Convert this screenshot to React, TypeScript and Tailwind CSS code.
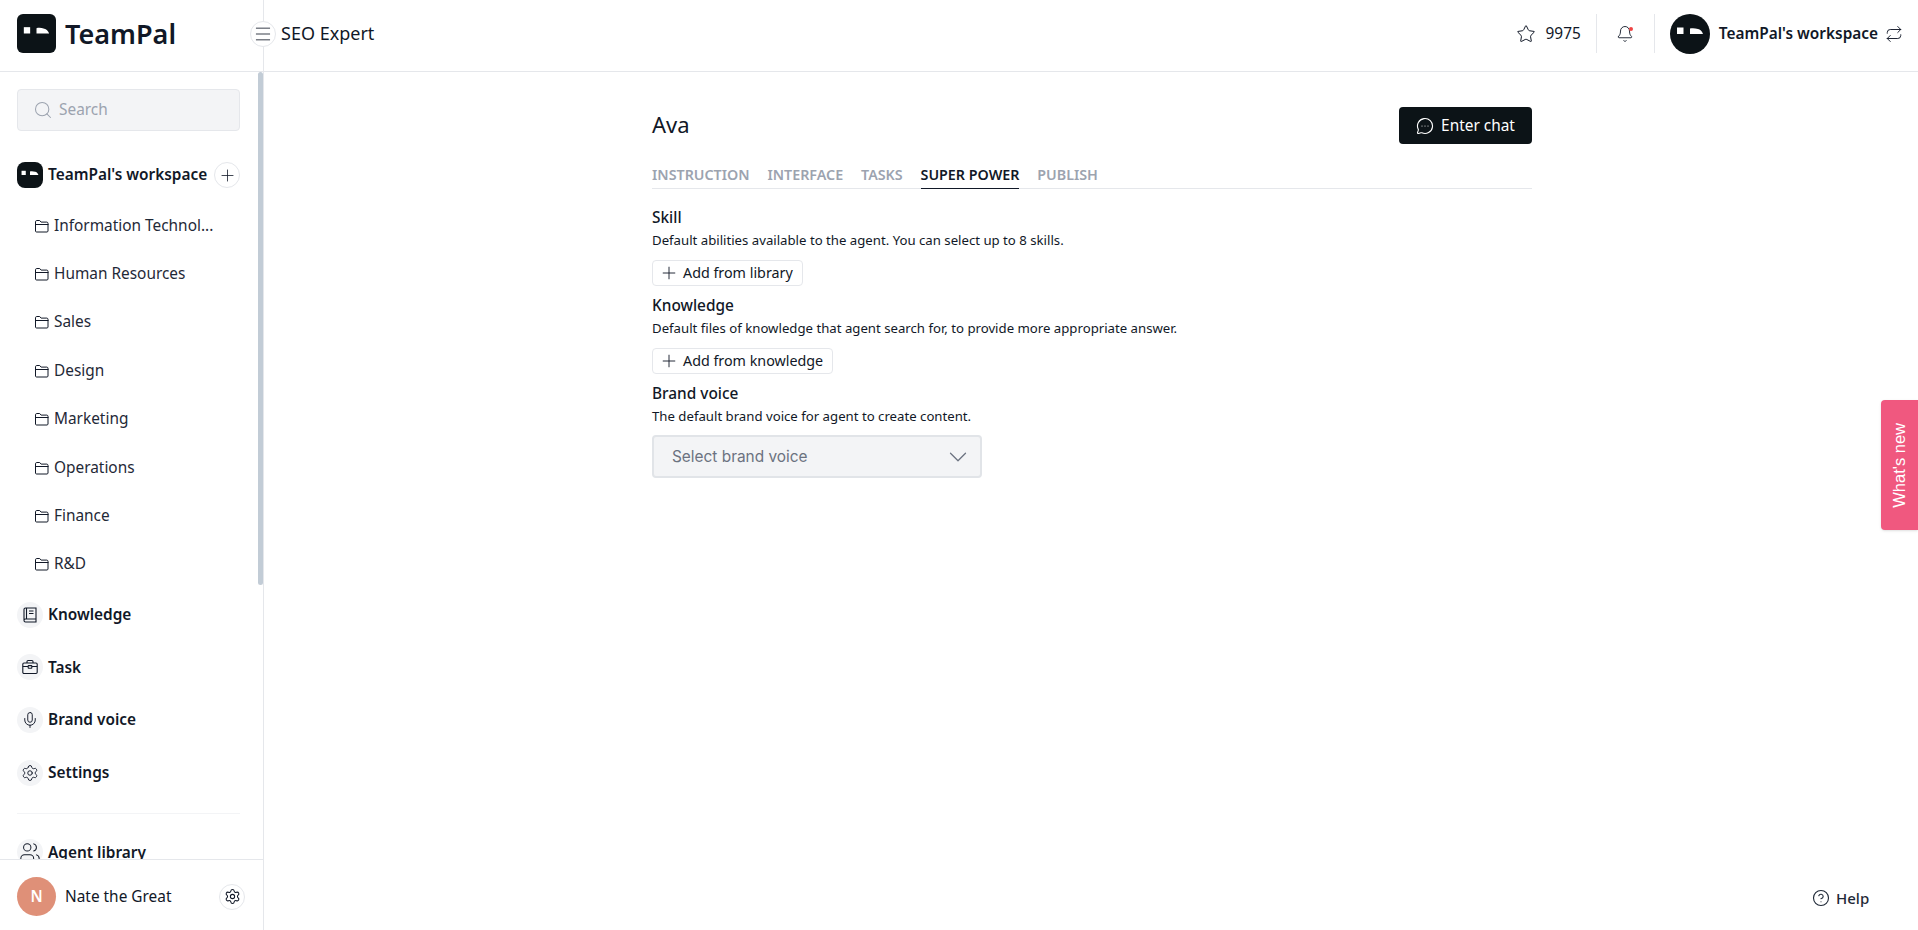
import React from "react";
import { Search, Plus, Settings, Star, Bell, Repeat, HelpCircle, Menu, ChevronDown, Users, Mic, MessageCircleMore } from "lucide-react";

function Mark({ className }: { className: string }) {
  return (
    <svg viewBox="0 0 40 40" className={className} aria-hidden>
      <rect x="0" y="0" width="40" height="40" fill="#0c1317" />
      <rect x="7" y="13.5" width="6.5" height="6.5" fill="#ffffff" />
      <path d="M20 14.5 L20 20 L33 20 C32 17 30 15.5 28 15 C25 14 22 14 20 14.5 Z" fill="#ffffff" />
    </svg>
  );
}

function FolderIcon() {
  return (
    <svg width="16" height="16" viewBox="0 0 16 16" fill="none" stroke="currentColor" strokeWidth="1" className="shrink-0" aria-hidden>
      <path d="M1.5 13V3.8c0-.7.5-1.3 1.2-1.3h3l1.4 1.6h5.7c.7 0 1.2.5 1.2 1.2V13c0 .6-.5 1-1 1H2.5c-.6 0-1-.4-1-1Z" />
      <path d="M1.5 6.5h13" />
    </svg>
  );
}

function BookIcon() {
  return (
    <svg width="18" height="18" viewBox="0 0 18 18" fill="none" stroke="currentColor" strokeWidth="1.1" aria-hidden>
      <path d="M3 14V3.5C3 2.7 3.7 2 4.5 2H15v11H4.5C3.7 13 3 13.6 3 14.5S3.7 16 4.5 16H15v-3" />
      <path d="M5.5 2v11" />
      <path d="M8 5h4.5M8 7.5h4.5" />
    </svg>
  );
}

function CaseIcon() {
  return (
    <svg width="18" height="18" viewBox="0 0 18 18" fill="none" stroke="currentColor" strokeWidth="1.1" aria-hidden>
      <rect x="1.8" y="5" width="14.4" height="10.5" rx="1.2" />
      <path d="M6 5V3.6C6 3 6.5 2.5 7.1 2.5h3.8c.6 0 1.1.5 1.1 1.1V5" />
      <path d="M1.8 8.5h5.2M11 8.5h5.2" />
      <rect x="7.2" y="7.6" width="3.6" height="2.6" rx=".4" />
    </svg>
  );
}

const folders = ["Information Technol...", "Human Resources", "Sales", "Design", "Marketing", "Operations", "Finance", "R&D"];
const folderH = ["h-[48px]", "h-[48px]", "h-[48px]", "h-[49px]", "h-[48px]", "h-[49px]", "h-[48px]", "h-[48px]"];

function NavItem({ icon, label }: { icon: React.ReactNode; label: string }) {
  return (
    <div className="flex items-center gap-[5px] h-[52.6px] shrink-0">
      <div className="w-[26px] h-[26px] rounded-full bg-[#f3f4f6] flex items-center justify-center text-[#111827]">{icon}</div>
      <span className="text-[15.4px] font-semibold text-[#111827]">{label}</span>
    </div>
  );
}

function Section({ title, desc, children }: { title: string; desc: string; children: React.ReactNode }) {
  return (
    <div>
      <div className="text-[15.4px] leading-[24px] font-medium text-[#111827] pt-[1px]">{title}</div>
      <div className="text-[13.2px] leading-[20px] text-[#111827]">{desc}</div>
      {children}
    </div>
  );
}

function AddButton({ label }: { label: string }) {
  return (
    <div className="mt-[10px] mb-[7px] inline-flex items-center h-[26px] pl-[6px] pr-[9px] gap-[4px] rounded-[4px] border border-[#e5e7eb] bg-white text-[14.3px] text-[#111827]">
      <Plus size={20} strokeWidth={1.1} />
      <span>{label}</span>
    </div>
  );
}

export default function App() {
  return (
    <div className="relative w-full h-[930px] overflow-hidden bg-white flex flex-col text-[#111827] font-['Noto_Sans','Liberation_Sans',sans-serif]">
      <header className="h-[72px] shrink-0 flex border-b border-[#e5e7eb]">
        <div className="w-[264px] shrink-0 border-r border-[#e5e7eb] flex items-center pl-[17px] pb-[4px] gap-[9px]">
          <Mark className="w-[39px] h-[39px] rounded-[6px]" />
          <span className="text-[27px] font-semibold leading-none">TeamPal</span>
        </div>
        <div className="flex-1 flex items-center pl-[17px] pr-[14px] pb-[4px]">
          <span className="text-[18px]">SEO Expert</span>
          <div className="ml-auto flex items-center">
            <Star size={20} strokeWidth={1.2} />
            <span className="ml-[10px] text-[15.4px]">9975</span>
            <div className="w-px h-[39px] bg-[#e5e7eb] ml-[15px]" />
            <div className="relative w-[57px] flex justify-center">
              <Bell size={18} strokeWidth={1.2} />
              <span className="absolute top-[2px] left-[32px] w-[4px] h-[4px] rounded-full bg-[#ef4444]" />
            </div>
            <div className="w-px h-[39px] bg-[#e5e7eb]" />
            <Mark className="w-[40px] h-[40px] rounded-full ml-[15px]" />
            <span className="ml-[9px] text-[15.4px] font-semibold">TeamPal's workspace</span>
            <Repeat size={18} strokeWidth={1.25} className="ml-[7px] mr-[1px]" />
          </div>
        </div>
      </header>

      <div className="absolute left-[250px] top-[21px] w-[26px] h-[26px] rounded-full border border-[#e5e7eb] bg-white flex items-center justify-center">
        <Menu size={20} strokeWidth={1} />
      </div>

      <div className="flex-1 min-h-0 flex">
        <aside className="w-[264px] shrink-0 border-r border-[#e5e7eb] flex flex-col relative">
          <div className="flex-1 min-h-0 overflow-hidden px-[17px] pt-[17px] pr-[23px]">
            <div className="h-[42px] rounded-[4px] border border-[#e5e7eb] bg-[#f3f4f6] flex items-center pl-[15px] gap-[6px] text-[#9ca3af]">
              <Search size={20} strokeWidth={1.25} />
              <span className="text-[15.4px]">Search</span>
            </div>
            <div className="flex items-center mt-[31px] h-[26px]">
              <Mark className="w-[26px] h-[26px] rounded-[8px]" />
              <span className="ml-[5px] text-[15.4px] font-semibold whitespace-nowrap">TeamPal's workspace</span>
              <div className="ml-auto w-[26px] h-[26px] rounded-full border border-[#e5e7eb] flex items-center justify-center shrink-0">
                <Plus size={19} strokeWidth={1} />
              </div>
            </div>
            <div className="mt-[14px] pl-[17px]">
              {folders.map((f, i) => (
                <div key={f} className={`flex items-center gap-[4px] ${folderH[i]}`}>
                  <FolderIcon />
                  <span className="text-[15.4px] text-[#1f2937] whitespace-nowrap">{f}</span>
                </div>
              ))}
            </div>
            <div className="mt-[0.5px]">
              <NavItem icon={<BookIcon />} label="Knowledge" />
              <NavItem icon={<CaseIcon />} label="Task" />
              <NavItem icon={<Mic size={18} strokeWidth={1.25} />} label="Brand voice" />
              <NavItem icon={<Settings size={18} strokeWidth={1.25} />} label="Settings" />
            </div>
            <div className="h-px bg-[#f3f4f6] mt-[14px]" />
            <div className="mt-[12px]">
              <NavItem icon={<Users size={22} strokeWidth={1.1} />} label="Agent library" />
            </div>
          </div>
          <div className="absolute right-0 top-0 w-[5px] h-[513px] rounded-[3px] bg-[#c2ccd6]" />
          <div className="h-[71px] shrink-0 border-t border-[#e5e7eb] bg-white flex items-center pl-[17px] pr-[18px] pt-[3px]">
            <div className="w-[39px] h-[39px] rounded-full bg-[#df9078] text-white text-[15.4px] font-semibold flex items-center justify-center">N</div>
            <span className="ml-[9px] text-[15.4px]">Nate the Great</span>
            <div className="ml-auto w-[26px] h-[26px] rounded-full border border-[#e5e7eb] flex items-center justify-center">
              <Settings size={17} strokeWidth={1.5} />
            </div>
          </div>
        </aside>

        <main className="flex-1 min-w-0 pt-[35px] pl-[388px]">
          <div className="w-[880px]">
            <div className="flex items-center justify-between h-[37px]">
              <h1 className="text-[22px] font-normal text-[#111827] pb-[2px]">Ava</h1>
              <div className="h-[37px] w-[133px] rounded-[4px] bg-[#0c1317] text-white flex items-center justify-center gap-[7px] text-[15.4px]">
                <MessageCircleMore size={18} strokeWidth={1.5} />
                <span>Enter chat</span>
              </div>
            </div>
            <div className="mt-[18px] h-[27px] flex gap-[17.8px] border-b border-[#e5e7eb] text-[14.3px] font-semibold text-[#9ca3af]">
              <span className="pt-[2px]">INSTRUCTION</span>
              <span className="pt-[2px]">INTERFACE</span>
              <span className="pt-[2px]">TASKS</span>
              <span className="pt-[2px] text-[#111827] border-b border-[#111827] h-[27px]">SUPER POWER</span>
              <span className="pt-[2px]">PUBLISH</span>
            </div>
            <div className="mt-[16px] flex flex-col">
              <Section title="Skill" desc="Default abilities available to the agent. You can select up to 8 skills.">
                <AddButton label="Add from library" />
              </Section>
              <Section title="Knowledge" desc="Default files of knowledge that agent search for, to provide more appropriate answer.">
                <AddButton label="Add from knowledge" />
              </Section>
              <Section title="Brand voice" desc="The default brand voice for agent to create content.">
                <div className="mt-[9px] w-[330px] h-[43px] rounded-[4px] border-2 border-[#e1e4e8] bg-[#f3f4f6] flex items-center pl-[18px] pr-[7px] text-[#6b7280]">
                  <span className="text-[15.4px] pt-[1px] font-['Inter',sans-serif]">Select brand voice</span>
                  <ChevronDown size={30} strokeWidth={1} className="ml-auto text-[#6b7280]" />
                </div>
              </Section>
            </div>
          </div>
        </main>
      </div>

      <div className="absolute right-0 top-[400px] w-[37px] h-[130px] rounded-l-[4px] bg-[#f0587f] flex items-center justify-center shadow-sm">
        <span className="-rotate-90 whitespace-nowrap text-white text-[16.5px] font-['Liberation_Sans',sans-serif]">What's new</span>
      </div>

      <div className="absolute left-[1812px] top-[887px] flex items-center gap-[6px] text-[15px] font-medium text-[#1f2937]">
        <HelpCircle size={18} strokeWidth={1.5} />
        <span>Help</span>
      </div>
    </div>
  );
}
